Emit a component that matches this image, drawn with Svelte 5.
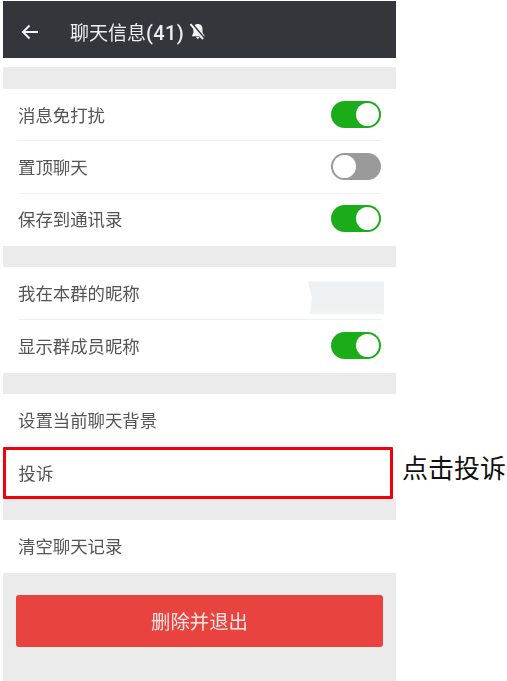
<script>
  const groups1 = [
    { label: '消息免打扰', on: true },
    { label: '置顶聊天', on: false },
    { label: '保存到通讯录', on: true }
  ];
</script>

<div class="page">
  <div class="phone">
    <header class="bar">
      <svg class="back" width="18" height="16" viewBox="0 0 18 16" fill="none" stroke="#f2f2f2" stroke-width="2"><path d="M17 8H2M8.500 1.500 2 8l6.500 6.500"/></svg>
      <span class="title">聊天信息<span class="count">(41)</span></span>
      <svg class="mute" width="17" height="17" viewBox="0 0 17 17"><path d="M8.800 1c3.200 0 4.700 2.300 4.700 5v3.700l2.300 3.500H2.800l1.600-3.500V6c0-2.700 1.200-5 4.400-5z" fill="#f4f4f4"/><path d="M6.800 13.800h4l-2 2.400z" fill="#f4f4f4"/><path d="M3 .8 15.500 15.600" stroke="#35363b" stroke-width="2.200"/><path d="M1.500 1.200 14 16" stroke="#f4f4f4" stroke-width="2"/></svg>
    </header>
    <div class="spacer"></div>
    <div class="gap g1"></div>

    {#each groups1 as r, i}
      <div class="row short" class:line={i < 2}>
        <span>{r.label}</span>
        <span class="sw" class:on={r.on}><i></i></span>
      </div>
    {/each}
    <div class="gap"></div>

    <div class="row line">
      <span>我在本群的昵称</span>
      <span class="smudge"></span>
    </div>
    <div class="row">
      <span>显示群成员昵称</span>
      <span class="sw on"><i></i></span>
    </div>
    <div class="gap"></div>

    <div class="row">设置当前聊天背景</div>
    <div class="row boxed">投诉</div>
    <div class="gap"></div>
    <div class="row">清空聊天记录</div>

    <div class="foot">
      <button class="exit">删除并退出</button>
    </div>
  </div>
  <div class="note">点击投诉</div>
</div>

<style>
  :global(body) { background: #fff; }
  .page {
    width: 507px;
    height: 681px;
    overflow: hidden;
    display: flex;
    align-items: flex-start;
    padding: 1px 0 0 3px;
    box-sizing: border-box;
    font-family: "Liberation Sans", "Noto Sans CJK SC", sans-serif;
  }
  .phone { width: 393px; flex: none; }
  .bar {
    height: 57px;
    background: #35363b;
    display: flex;
    align-items: center;
    padding: 4px 0 0 18px;
    box-sizing: border-box;
    color: #eee;
    filter: blur(0.4px);
  }
  .back { margin-right: 31px; }
  .title { font-family: "Roboto", "Noto Sans CJK SC", sans-serif; font-size: 19px; font-weight: 400; }
  .count { font-weight: 500; font-size: 20px; letter-spacing: 0.400px; }
  .mute { margin-left: 5px; }
  .spacer { height: 9px; }
  .gap { height: 21px; background: #ebebeb; }
  .g1 { height: 22px; }
  .row {
    height: 53px;
    display: flex;
    align-items: center;
    justify-content: space-between;
    padding: 0 15px 2px;
    box-sizing: border-box;
    color: #555;
    font-size: 17.400px;
    position: relative;
    filter: blur(0.4px);
  }
  .row.short { height: 52.330px; }
  .row.line::after {
    content: "";
    position: absolute;
    left: 15px;
    right: 15px;
    bottom: 0;
    height: 1px;
    background: #f0f0f0;
  }
  .boxed {
    width: 390px;
    height: 52px;
    border: 3px solid #f5000a;
    border-radius: 1px;
    padding: 0 12.500px;
  }
  .sw {
    width: 50px;
    height: 27px;
    border-radius: 13.500px;
    background: #9a9a9a;
    display: flex;
    align-items: center;
    padding: 2px;
    box-sizing: border-box;
  }
  .sw i { width: 23px; height: 23px; border-radius: 50%; background: #fff; display: block; }
  .sw.on { background: #1aad19; justify-content: flex-end; }
  .smudge {
    width: 76px;
    height: 33px;
    margin: 11px -3px 0 0;
    background: linear-gradient(#eef0f4, #eef0f4 55%, #eff5ef);
    clip-path: polygon(0 0, 100% 0, 100% 100%, 2% 100%, 5% 50%);
  }
  .foot { height: 108px; background: #ebebeb; padding: 22px 13px 0; box-sizing: border-box; }
  .exit {
    display: block;
    width: 367px;
    height: 52px;
    background: #e8433f;
    border: none;
    border-radius: 3px;
    color: #f8e6e4;
    font: inherit;
    font-size: 19.400px;
    filter: blur(0.4px);
  }
  .note {
    margin: 451px 0 0 6px;
    font-size: 26px;
    line-height: 34px;
    color: #111;
    white-space: nowrap;
  }
</style>
